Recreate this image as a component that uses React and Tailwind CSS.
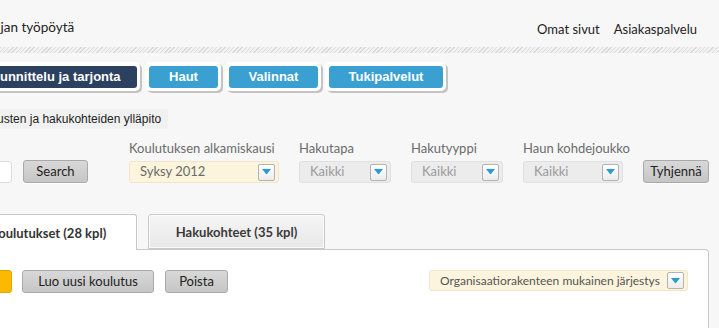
import React from "react";

const Arrow = () => (
  <div className="w-[17px] h-[17px] border border-[#b3b3b3] rounded-[2px] bg-gradient-to-b from-white to-[#ececec] flex items-center justify-center shrink-0">
    <svg width="9" height="6" viewBox="0 0 9 6">
      <path d="M0 0 L9 0 L4.5 5.5 Z" fill="#2a9bd3" />
    </svg>
  </div>
);

const Select = ({ w, text, cream }) => (
  <div
    className={`${w} h-[22px] rounded-[3px] border flex items-center justify-between pl-[10px] pr-[3px] text-[13px] ${
      cream
        ? "bg-[#fcf4dc] border-[#efe6cc] text-[#6a6a6a]"
        : "bg-[#ececec] border-[#e0e0e0] text-[#9a9a9a]"
    }`}
  >
    <span className="truncate">{text}</span>
    <Arrow />
  </div>
);

const Field = ({ w, label, children }) => (
  <div className={`${w} ml-[20px] flex flex-col shrink-0`}>
    <span className="text-[13px] leading-[16px] text-[#6b6b6b] mb-[5px] whitespace-nowrap">{label}</span>
    {children}
  </div>
);

const GrayBtn = ({ w, children }) => (
  <div
    className={`${w} h-[23px] rounded-[3px] border border-[#a9a9a9] bg-gradient-to-b from-[#d8d8d8] to-[#c6c6c6] shadow-[0_1px_0_rgba(255,255,255,0.8)] flex items-center justify-center text-[13px] text-[#222] shrink-0`}
  >
    {children}
  </div>
);

const NavBtn = ({ w, dark, children, extra = "" }) => (
  <div className={`bg-white rounded-[5px] pl-[4px] pt-[4px] pr-[3px] pb-[3px] shadow-[2px_2px_0_#c4c4c4] ${extra}`}>
    <div
      className={`${w} h-[22px] rounded-[3px] flex items-center justify-center text-white font-bold text-[13px] ${
        dark ? "bg-[#2c405f]" : "bg-[#3aa0d1]"
      }`}
      style={{ fontFamily: '"Liberation Sans", Arial, sans-serif' }}
    >
      {children}
    </div>
  </div>
);

export default function App() {
  return (
    <div
      className="w-[719px] h-[328px] overflow-hidden bg-[#f7f7f7] text-[#333]"
      style={{ fontFamily: 'Lato, "Noto Sans", sans-serif' }}
    >
      {/* header */}
      <div className="h-[47px] flex items-start justify-between pt-[18px] pr-[22px]">
        <div className="text-[13.5px] leading-[18px] text-[#222] -ml-[40px] whitespace-nowrap">
          Virkailijan työpöytä
        </div>
        <div className="flex gap-[14px] text-[13px] leading-[18px] pt-[2px] text-[#222]">
          <span>Omat sivut</span>
          <span>Asiakaspalvelu</span>
        </div>
      </div>
      {/* hatched strip */}
      <div className="h-[6px] bg-[repeating-linear-gradient(135deg,#dadada_0px,#dadada_1px,#f2f2f2_1px,#f2f2f2_3px)]" />

      {/* nav */}
      <div className="flex gap-[4px] mt-[9px] -ml-[37px]">
        <NavBtn w="w-[170px]" dark extra="mr-[1px]">
          Suunnittelu ja tarjonta
        </NavBtn>
        <NavBtn w="w-[69px]">Haut</NavBtn>
        <NavBtn w="w-[89px]">Valinnat</NavBtn>
        <NavBtn w="w-[114px]">Tukipalvelut</NavBtn>
      </div>

      {/* subtitle */}
      <div className="mt-[18px] -ml-[44px] w-[212px] h-[20px] bg-[#f1f1f1] flex items-center pl-[7px]">
        <span
          className="text-[12px] text-[#222] whitespace-nowrap"
          style={{ fontFamily: '"Liberation Sans", Arial, sans-serif' }}
        >
          Koulutusten ja hakukohteiden ylläpito
        </span>
      </div>

      {/* filters */}
      <div className="flex items-end mt-[11px] -ml-[120px]">
        <div className="w-[132px] h-[22px] rounded-[3px] border border-[#dcdcdc] bg-white shrink-0" />
        <div className="ml-[11px]">
          <GrayBtn w="w-[65px]">Search</GrayBtn>
        </div>
        <div className="w-[21px] shrink-0" />
        <Field w="w-[150px]" label="Koulutuksen alkamiskausi">
          <Select w="w-[150px]" text="Syksy 2012" cream />
        </Field>
        <Field w="w-[92px]" label="Hakutapa">
          <Select w="w-[92px]" text="Kaikki" />
        </Field>
        <Field w="w-[92px]" label="Hakutyyppi">
          <Select w="w-[92px]" text="Kaikki" />
        </Field>
        <Field w="w-[100px]" label="Haun kohdejoukko">
          <Select w="w-[100px]" text="Kaikki" />
        </Field>
        <div className="ml-[20px]">
          <GrayBtn w="w-[66px]">Tyhjennä</GrayBtn>
        </div>
      </div>

      {/* tabs + panel */}
      <div className="mt-[31px] -ml-[41px] w-[750px]">
        <div className="flex gap-[11px] relative z-10">
          <div className="w-[178px] h-[36px] -mb-px bg-white border border-b-0 border-[#c9c9c9] rounded-t-[3px] flex items-center justify-center pt-[2px] font-bold text-[13px] text-[#333]">
            Koulutukset (28 kpl)
          </div>
          <div className="w-[177px] h-[35px] bg-gradient-to-b from-[#f6f6f6] to-[#e7e7e7] border border-[#c9c9c9] shadow-[inset_0_0_0_1px_#fafafa] rounded-t-[3px] flex items-center justify-center pt-[2px] font-bold text-[13px] text-[#3a3a3a]">
            Hakukohteet (35 kpl)
          </div>
        </div>
        <div className="bg-white border-t border-r border-[#c9c9c9] rounded-tr-[4px] h-[120px] pt-[20px] pr-[20px] flex items-start justify-between">
          <div className="flex items-center -ml-[37px]">
            <div className="w-[90px] h-[23px] rounded-[3px] border border-[#e1a400] bg-[#fbb900] text-white text-[13px] flex items-center justify-center">
              Kopioi
            </div>
            <div className="ml-[10px]">
              <GrayBtn w="w-[132px]">Luo uusi koulutus</GrayBtn>
            </div>
            <div className="ml-[11px]">
              <GrayBtn w="w-[63px]">Poista</GrayBtn>
            </div>
          </div>
          <div className="w-[259px] h-[21px] rounded-[3px] border border-[#efe6cc] bg-[#fcf4dc] flex items-center justify-between pl-[10px] pr-[3px] text-[12px] text-[#555]">
            <span className="whitespace-nowrap">Organisaatiorakenteen mukainen järjestys</span>
            <Arrow />
          </div>
        </div>
      </div>
    </div>
  );
}
